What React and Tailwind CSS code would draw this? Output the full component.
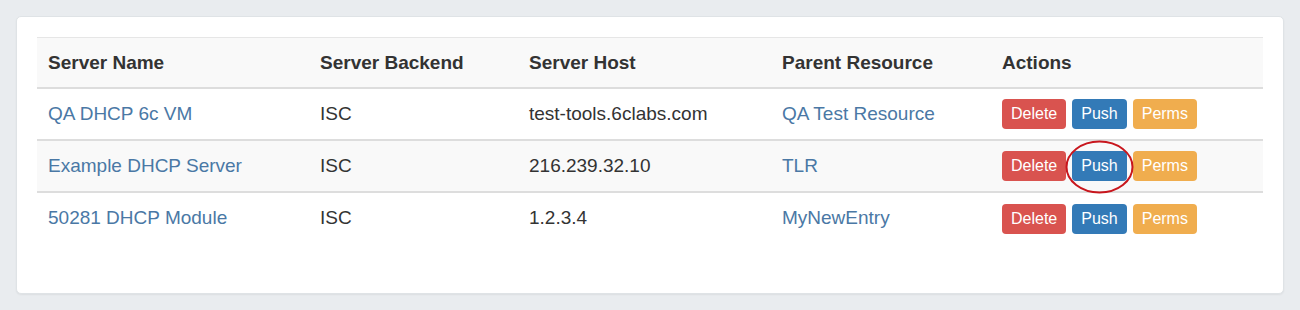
const rows = [
  { name: "QA DHCP 6c VM", backend: "ISC", host: "test-tools.6clabs.com", parent: "QA Test Resource" },
  { name: "Example DHCP Server", backend: "ISC", host: "216.239.32.10", parent: "TLR", circled: true },
  { name: "50281 DHCP Module", backend: "ISC", host: "1.2.3.4", parent: "MyNewEntry" },
];

function Btn({ color, children }) {
  return (
    <span className={`inline-block h-[30px] px-[9px] leading-[30px] text-[16px] text-white rounded-[4px] ${color}`}>
      {children}
    </span>
  );
}

export default function App() {
  return (
    <div
      className="w-[1300px] h-[310px] bg-[#e9ecef] p-4 text-[#333]"
      style={{ fontFamily: '"Liberation Sans", Arial, sans-serif' }}
    >
      <div className="h-[278px] bg-white rounded-[5px] border border-[#dfe3e6] shadow-[0_1px_2px_rgba(0,0,0,0.06)] px-5 pt-5">
        <table className="w-full border-collapse text-[19px]">
          <colgroup>
            <col className="w-[272px]" />
            <col className="w-[209px]" />
            <col className="w-[253px]" />
            <col className="w-[220px]" />
            <col className="w-[272px]" />
          </colgroup>
          <thead>
            <tr className="bg-[#f9f9f9] border-t border-[#e6e6e6] border-b-2 border-b-[#ddd]">
              {["Server Name", "Server Backend", "Server Host", "Parent Resource", "Actions"].map((h) => (
                <th key={h} className="text-left font-bold h-[50px] px-[11px] pt-[1px] align-middle">
                  {h}
                </th>
              ))}
            </tr>
          </thead>
          <tbody>
            {rows.map((r, i) => (
              <tr key={r.name} className={`border-t-2 border-[#ddd] first:border-t-0 ${i === 1 ? "bg-[#f9f9f9]" : "bg-white"}`}>
                <td className="h-[52px] px-[11px] pt-[1px] align-middle text-[#4a78a5]">{r.name}</td>
                <td className="px-[11px] pt-[1px] align-middle">{r.backend}</td>
                <td className="px-[11px] pt-[1px] align-middle">{r.host}</td>
                <td className="px-[11px] pt-[1px] align-middle text-[#4a78a5]">{r.parent}</td>
                <td className="px-[11px] pt-[1px] align-middle">
                  <div className="flex gap-[6px]">
                    <Btn color="bg-[#d9534f]">Delete</Btn>
                    <span className="relative inline-block">
                      <Btn color="bg-[#337ab7]">Push</Btn>
                      {r.circled && (
                        <svg
                          className="absolute left-[-7px] top-[-12px] pointer-events-none"
                          width="70"
                          height="56"
                          viewBox="0 0 70 56"
                        >
                          <ellipse cx="34.5" cy="28" rx="33" ry="25.5" fill="none" stroke="#c8161d" strokeWidth="2" />
                        </svg>
                      )}
                    </span>
                    <Btn color="bg-[#f0ad4e]">Perms</Btn>
                  </div>
                </td>
              </tr>
            ))}
          </tbody>
        </table>
      </div>
    </div>
  );
}
